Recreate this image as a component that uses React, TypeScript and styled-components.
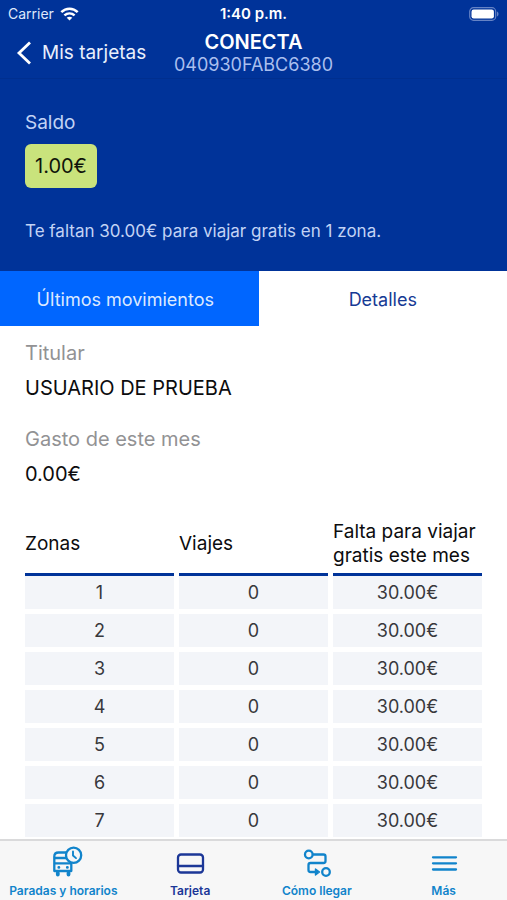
import React from "react";
import styled, { createGlobalStyle } from "styled-components";

const color = {
  navy: "#003399",
  blue: "#0066ff",
  sky: "#1184cb",
  lime: "#c9e37c",
  pale: "#c3d3f5",
  cell: "#f3f5f9",
  bar: "#f7f7f7",
};

const GlobalStyle = createGlobalStyle`
  *, *::before, *::after { box-sizing: border-box; }
  body {
    margin: 0;
    background: #fff;
    color: #0c0c0e;
    font-family: Inter, "Liberation Sans", sans-serif;
    font-size: 19px;
    line-height: 24px;
  }
  button { font: inherit; border: 0; padding: 0; background: none; cursor: pointer; }
  h1, p, dl, dd { margin: 0; }
`;

const Screen = styled.div`
  display: flex;
  flex-direction: column;
  height: 100vh;
`;

const Header = styled.header`
  flex: none;
  background: ${color.navy};
  color: #fff;
  border-bottom: 1px solid #002f8f;
`;

const StatusBar = styled.div`
  display: grid;
  grid-template-columns: 1fr auto 1fr;
  align-items: center;
  height: 28px;
  padding: 0 8px;
  font-size: 15px;
  line-height: 20px;
`;

const Carrier = styled.div`
  display: flex;
  align-items: center;
  gap: 6px;
  color: #dfe8fb;
  font-size: 14px;
`;

const Clock = styled.time`
  font-weight: 600;
`;

const Battery = styled.svg`
  justify-self: end;
`;

const TitleBar = styled.div`
  display: grid;
  grid-template-columns: 1fr auto 1fr;
  align-items: center;
  height: 50px;
  padding: 0 16px;
`;

const BackButton = styled.button`
  && {
    display: flex;
    align-items: center;
    gap: 10px;
    color: #e9effc;
    font-size: 19px;
    white-space: nowrap;
  }
`;

const Titles = styled.div`
  text-align: center;
`;

const Title = styled.h1`
  font-size: 20px;
  line-height: 24px;
  font-weight: 600;
`;

const CardNumber = styled.p`
  color: #aabfee;
  font-size: 18px;
  line-height: 22px;
`;

const Main = styled.main`
  flex: 1;
  min-height: 0;
  overflow-y: auto;
  scrollbar-width: none;
`;

const BalancePanel = styled.section`
  display: flex;
  flex-direction: column;
  align-items: flex-start;
  padding: 32px 25px 28px;
  background: ${color.navy};
  color: ${color.pale};
`;

const BalanceLabel = styled.p`
  font-size: 19px;
`;

const Balance = styled.p`
  margin: 9px 0 31px;
  padding: 10px;
  border-radius: 6px;
  background: ${color.lime};
  color: #10140a;
  font-size: 20px;
`;

const Notice = styled.p`
  font-size: 17px;
`;

const Tabs = styled.div`
  display: grid;
  grid-template-columns: 51fr 49fr;
`;

const Tab = styled.button<{ $filled?: boolean }>`
  && {
    height: 55px;
    padding: ${(p) => (p.$filled ? "2px 8px 0 0" : "2px 0 0")};
    font-size: 18px;
    background: ${(p) => (p.$filled ? color.blue : "#fff")};
    color: ${(p) => (p.$filled ? "#dce9ff" : "#163a94")};
  }
`;

const Details = styled.dl`
  padding: 15px 25px 0;
  font-size: 20px;
`;

const Term = styled.dt`
  color: #929294;
`;

const Value = styled.dd`
  padding: 11px 0 27px;
`;

const TableWrap = styled.div`
  padding: 2px 20px 0;
`;

const ZoneTable = styled.table`
  width: 100%;
  table-layout: fixed;
  border-collapse: separate;
  border-spacing: 5px;
`;

const HeadCell = styled.th`
  padding: 0;
  font-weight: 400;
  text-align: left;
  vertical-align: middle;
`;

const ZoneRow = styled.tr`
  &:first-child td { border-top: 3px solid ${color.navy}; }
`;

const Cell = styled.td`
  padding: 5px 0 4px;
  background: ${color.cell};
  color: #38383c;
  font-size: 18px;
  text-align: center;
`;

const TabBar = styled.nav`
  flex: none;
  display: grid;
  grid-template-columns: repeat(4, 1fr);
  height: 61px;
  border-top: 2px solid #dadadb;
  background: ${color.bar};
`;

const NavItem = styled.a<{ $active?: boolean }>`
  display: flex;
  flex-direction: column;
  align-items: center;
  gap: 6px;
  padding-top: 4px;
  color: ${(p) => (p.$active ? "#1c3797" : color.sky)};
  font-size: 12px;
  font-weight: 600;
  line-height: 16px;
  text-decoration: none;
  white-space: nowrap;
`;

const NavIcon = styled.svg.attrs({
  width: 40,
  height: 32,
  viewBox: "-4 0 40 32",
  fill: "none",
  stroke: "currentColor",
  strokeWidth: 2.3,
  strokeLinecap: "round",
  strokeLinejoin: "round",
  "aria-hidden": true,
})``;

const WifiIcon = () => (
  <svg width="19" height="14" viewBox="0 0 19 14" fill="none" stroke="#fff" strokeWidth="2.5" aria-hidden="true">
    <path d="M1.3 5.2C6 .6 13 .6 17.7 5.2" />
    <path d="M4.4 8.4c3-2.700 7.200-2.700 10.200 0" />
    <path d="M9.500 13.600 6.700 10.800c1.600-1.300 4-1.300 5.600 0z" fill="#fff" stroke="none" />
  </svg>
);

const BusIcon = () => (
  <NavIcon>
    <path d="M20 7.500h-8.500C9 7.500 7.300 9 7.300 11.500V26h17v-7" />
    <path d="M8 13h12M8 18.300h16" />
    <path d="M10.800 28v1.500M21.500 28v1.500" strokeWidth="3.800" />
    <path d="M11.800 22.400h.1M20.300 22.400h.1" strokeWidth="2.800" />
    <circle cx="26.600" cy="10.200" r="7.600" fill={color.bar} />
    <path d="M26 6.500v4l3 2.600" strokeWidth="1.900" />
  </NavIcon>
);

const CardIcon = () => (
  <NavIcon>
    <rect x="4" y="9.500" width="25" height="18" rx="3" />
    <path d="M4 21h25" />
  </NavIcon>
);

const RouteIcon = () => (
  <NavIcon>
    <circle cx="7.800" cy="9.500" r="3.800" />
    <circle cx="25" cy="27" r="3.800" />
    <path d="M12 9.500h10.500c1.300 0 2 .7 2 2V16c0 1.300-.7 2-2 2H9.500c-1.300 0-2 .7-2 2v5c0 1.300.7 2 2 2H16" />
    <path d="m14.500 24 4 3-4 3z" fill="currentColor" strokeWidth="1.400" />
  </NavIcon>
);

const MenuIcon = () => (
  <NavIcon>
    <path d="M5 12.300h23M5 18.300h23M5 24.500h23" />
  </NavIcon>
);

const navItems = [
  { label: "Paradas y horarios", Icon: BusIcon },
  { label: "Tarjeta", Icon: CardIcon, active: true },
  { label: "Cómo llegar", Icon: RouteIcon },
  { label: "Más", Icon: MenuIcon },
];

const zones = [1, 2, 3, 4, 5, 6, 7].map((zone) => ({ zone, trips: 0, left: "30.00€" }));

export default function App() {
  return (
    <Screen>
      <GlobalStyle />
      <Header>
        <StatusBar>
          <Carrier>
            Carrier
            <WifiIcon />
          </Carrier>
          <Clock>1:40 p.m.</Clock>
          <Battery width="30" height="14" viewBox="0 0 30 14" aria-hidden="true">
            <rect x=".7" y=".7" width="26" height="12.600" rx="3.800" fill="none" stroke="#6583c5" strokeWidth="1.200" />
            <rect x="2.500" y="2.500" width="22.400" height="9" rx="2.200" fill="#fff" />
            <path d="M28 4.500c2 .8 2 4.200 0 5z" fill="#6583c5" />
          </Battery>
        </StatusBar>
        <TitleBar>
          <BackButton type="button">
            <svg width="16" height="24" viewBox="0 0 16 24" fill="none" stroke="#fff" strokeWidth="2.800" aria-hidden="true">
              <path d="M14 1.500 3 12l11 10.500" />
            </svg>
            Mis tarjetas
          </BackButton>
          <Titles>
            <Title>CONECTA</Title>
            <CardNumber>040930FABC6380</CardNumber>
          </Titles>
        </TitleBar>
      </Header>

      <Main>
        <BalancePanel>
          <BalanceLabel>Saldo</BalanceLabel>
          <Balance>1.00€</Balance>
          <Notice>Te faltan 30.00€ para viajar gratis en 1 zona.</Notice>
        </BalancePanel>

        <Tabs role="tablist">
          <Tab type="button" role="tab" aria-selected={false} $filled>
            Últimos movimientos
          </Tab>
          <Tab type="button" role="tab" aria-selected>
            Detalles
          </Tab>
        </Tabs>

        <Details>
          <Term>Titular</Term>
          <Value>USUARIO DE PRUEBA</Value>
          <Term>Gasto de este mes</Term>
          <Value>0.00€</Value>
        </Details>

        <TableWrap>
          <ZoneTable>
            <thead>
              <tr>
                <HeadCell scope="col">Zonas</HeadCell>
                <HeadCell scope="col">Viajes</HeadCell>
                <HeadCell scope="col">Falta para viajar gratis este mes</HeadCell>
              </tr>
            </thead>
            <tbody>
              {zones.map(({ zone, trips, left }) => (
                <ZoneRow key={zone}>
                  <Cell>{zone}</Cell>
                  <Cell>{trips}</Cell>
                  <Cell>{left}</Cell>
                </ZoneRow>
              ))}
            </tbody>
          </ZoneTable>
        </TableWrap>
      </Main>

      <TabBar>
        {navItems.map(({ label, Icon, active }) => (
          <NavItem key={label} href="#" $active={active} aria-current={active ? "page" : undefined}>
            <Icon />
            {label}
          </NavItem>
        ))}
      </TabBar>
    </Screen>
  );
}
